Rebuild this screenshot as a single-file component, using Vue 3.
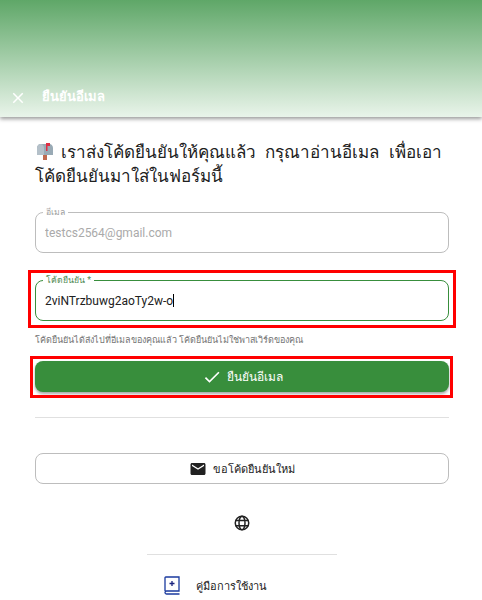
<template>
  <div class="page">
    <header class="app-bar">
      <svg class="close-icon" viewBox="0 0 24 24" width="18" height="18">
        <path d="M19 6.41 17.59 5 12 10.59 6.41 5 5 6.41 10.59 12 5 17.59 6.41 19 12 13.41 17.59 19 19 17.59 13.41 12z" fill="#fff" />
      </svg>
      <span class="app-title">ยืนยันอีเมล</span>
    </header>

    <main class="content">
      <h2 class="intro">
        <svg class="mailbox" viewBox="0 0 16 17" width="16" height="17">
          <rect x="6" y="11" width="4" height="6" fill="#c1694f" />
          <path d="M0 5C0 2.800 1.500 1 3.500 1h9C14.500 1 16 2.800 16 5v7H0z" fill="#99aab5" />
          <path d="M3.500 1C5.500 1 7 2.800 7 5v7H0V5c0-2.200 1.500-4 3.500-4z" fill="#b4c0c9" />
          <path d="M9 0h1.500v8H9z" fill="#dd2e44" />
          <path d="M9 0h4v3H9z" fill="#dd2e44" />
        </svg>
        เราส่งโค้ดยืนยันให้คุณแล้ว กรุณาอ่านอีเมล เพื่อเอาโค้ดยืนยันมาใส่ในฟอร์มนี้
      </h2>

      <fieldset class="field">
        <legend class="legend">อีเมล</legend>
        <input class="field-input" :value="email" disabled />
      </fieldset>

      <div class="marked code-mark">
        <fieldset class="field field-active">
          <legend class="legend">โค้ดยืนยัน *</legend>
          <div class="field-input code-value">{{ code }}<span class="caret"></span></div>
        </fieldset>
      </div>

      <p class="hint">โค้ดยืนยันได้ส่งไปที่อีเมลของคุณแล้ว โค้ดยืนยันไม่ใช่พาสเวิร์ดของคุณ</p>

      <div class="marked submit-mark">
        <button class="submit" type="button">
          <svg viewBox="0 0 24 24" width="20" height="20">
            <path d="M9 16.170 4.830 12l-1.420 1.410L9 19 21 7l-1.410-1.410z" fill="#fff" />
          </svg>
          ยืนยันอีเมล
        </button>
      </div>

      <hr class="divider" />

      <button class="resend" type="button">
        <svg viewBox="0 0 24 24" width="18" height="18">
          <path d="M20 4H4c-1.100 0-2 .9-2 2v12c0 1.100.9 2 2 2h16c1.100 0 2-.9 2-2V6c0-1.100-.9-2-2-2zm0 4-8 5-8-5V6l8 5 8-5v2z" fill="#212121" />
        </svg>
        ขอโค้ดยืนยันใหม่
      </button>

      <svg class="globe" viewBox="0 0 24 24" width="18" height="18">
        <circle cx="12" cy="12" r="9" fill="none" stroke="#212121" stroke-width="2" />
        <ellipse cx="12" cy="12" rx="4" ry="9" fill="none" stroke="#212121" stroke-width="2" />
        <path d="M3.500 8.500h17M3.500 15.500h17" stroke="#212121" stroke-width="2" />
      </svg>

      <hr class="short-divider" />

      <a class="manual">
        <svg class="book" viewBox="0 0 16 19" width="16" height="19">
          <path d="M1 15V1.800A.8.8 0 0 1 1.800 1H15v14H2.500A1.500 1.500 0 0 0 1 16.500 1.500 1.500 0 0 0 2.500 18H15.500" fill="none" stroke="#1a3a9e" stroke-width="1.300" />
          <path d="M8 5v5M5.500 7.500h5" stroke="#1a237e" stroke-width="1.300" />
        </svg>
        <span>คู่มือการใช้งาน</span>
      </a>
    </main>
  </div>
</template>

<script setup>
const email = 'testcs2564@gmail.com'
const code = '2viNTrzbuwg2aoTy2w-o'
</script>

<style>
html,
body {
  margin: 0;
  background: #fff;
  overflow: hidden;
}
</style>

<style scoped>
.page {
  width: 482px;
  height: 600px;
  overflow: hidden;
  font-family: Roboto, "Noto Sans", "DejaVu Sans", sans-serif;
  color: #212121;
}

.app-bar {
  height: 117px;
  box-sizing: border-box;
  padding: 0 0 10px 9px;
  display: flex;
  align-items: flex-end;
  background: linear-gradient(#5fa768, #e9f4ea);
  box-shadow: 0 2px 4px rgba(0, 0, 0, 0.4);
}

.app-title {
  margin-left: 15px;
  font-size: 13px;
  font-weight: 700;
  line-height: 20px;
  color: #fff;
}

.content {
  padding: 23px 33px 0 35px;
  display: flex;
  flex-direction: column;
}

.intro {
  margin: 0 0 20px;
  font-size: 17px;
  font-weight: 400;
  line-height: 24px;
  word-spacing: 5px;
  text-indent: 2px;
}

.mailbox {
  vertical-align: -2px;
  margin-right: -1px;
}

.field {
  margin: 0;
  padding: 0 9px;
  height: 45px;
  box-sizing: border-box;
  border: 1px solid #bdbdbd;
  border-radius: 8px;
  min-width: 0;
}

.legend {
  margin-left: -2px;
  padding: 0 3px;
  font-size: 8.7px;
  line-height: 9px;
  color: #9e9e9e;
}

.field-input {
  display: block;
  width: 100%;
  border: 0;
  padding: 0;
  height: 32px;
  background: none;
  font: 12px/32px Roboto, sans-serif;
  color: #aaa;
}

.marked {
  position: relative;
}

.marked::after {
  content: "";
  position: absolute;
  border: 3px solid #f00;
  pointer-events: none;
}

.code-mark {
  margin-top: 23px;
}

.code-mark::after {
  inset: -6px -7px -7px -7px;
}

.field-active {
  border-color: #388e3c;
}

.field-active .legend {
  color: #4f8a53;
}

.code-value {
  color: #212121;
}

.caret {
  display: inline-block;
  width: 1px;
  height: 13px;
  vertical-align: -2px;
  background: #000;
}

.hint {
  margin: 12px 0 0;
  font-size: 9px;
  line-height: 14px;
  color: #757575;
}

.submit-mark {
  margin-top: 14px;
}

.submit-mark::after {
  inset: -5px -4px -6px -5px;
}

.submit {
  display: flex;
  width: 100%;
  height: 31px;
  align-items: center;
  justify-content: center;
  gap: 5px;
  border: 0;
  border-radius: 8px;
  background: #388e3c;
  box-shadow: 0 2px 3px rgba(0, 0, 0, 0.35);
  color: #fff;
  font: 500 12px Roboto, sans-serif;
}

.divider {
  width: 100%;
  margin: 25px 0 0;
  border: 0;
  border-top: 1px solid #e0e0e0;
}

.resend {
  margin-top: 35px;
  width: 100%;
  height: 31px;
  display: flex;
  align-items: center;
  justify-content: center;
  gap: 6px;
  border: 1px solid #bdbdbd;
  border-radius: 8px;
  background: #fff;
  color: #212121;
  font: 11px Roboto, sans-serif;
}

.globe {
  align-self: center;
  margin-top: 30px;
}

.short-divider {
  align-self: center;
  width: 190px;
  margin: 22px 0 0;
  border: 0;
  border-top: 1px solid #e0e0e0;
}

.manual {
  margin: 21px 0 0 129px;
  display: flex;
  align-items: center;
  gap: 16px;
  font-size: 11px;
}
</style>
